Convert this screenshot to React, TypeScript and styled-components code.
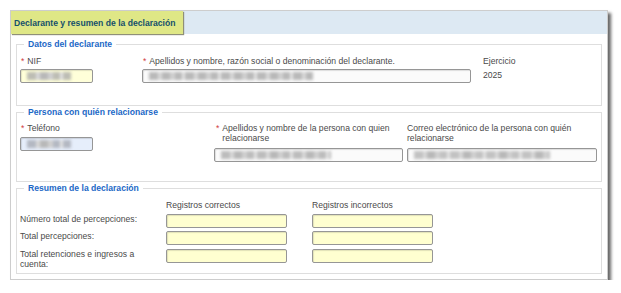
import React from "react";
import styled, { createGlobalStyle } from "styled-components";

const GlobalStyle = createGlobalStyle`
  html, body { margin: 0; padding: 0; background: #fff; }
  body {
    font-family: "Liberation Sans", Arial, sans-serif;
    font-size: 8.6px;
    line-height: 10px;
    color: #4a4a4a;
  }
`;

const Panel = styled.div`
  margin: 10px 0 0 10px;
  width: 598px;
  box-sizing: border-box;
  border: 1px solid #cdcdcd;
  background: #fff;
  box-shadow: 3px 3px 3px rgba(0, 0, 0, 0.6);
`;

const Header = styled.div`
  height: 23px;
  background: #dde9f3;
  display: flex;
`;

const TitleTab = styled.div`
  width: 172px;
  box-sizing: border-box;
  padding-left: 3px;
  background: #dfe786;
  box-shadow: 1px 1px 1px #8f8f78;
  display: flex;
  align-items: center;
  font-weight: bold;
  color: #15506b;
`;

const Body = styled.div`
  padding: 5px;
  display: flex;
  flex-direction: column;
  gap: 1px;
`;

const Fieldset = styled.fieldset<{ $pt: number; $pb: number }>`
  margin: 0;
  min-width: 0;
  border: 1px solid #dedede;
  padding: ${(p) => p.$pt}px 3px ${(p) => p.$pb}px 3px;
`;

const Legend = styled.legend`
  margin-left: 4px;
  padding: 0 4px;
  font-weight: bold;
  color: #1b68c6;
  line-height: 10px;
`;

const Grid = styled.div<{ $cols: string }>`
  display: grid;
  grid-template-columns: ${(p) => p.$cols};
  align-items: start;
`;

const Field = styled.div<{ $gap?: number }>`
  display: flex;
  flex-direction: column;
  align-items: flex-start;
  gap: ${(p) => p.$gap ?? 4}px;
`;

const Label = styled.div<{ $indent?: number }>`
  display: flex;
  padding-left: ${(p) => p.$indent ?? 0}px;
`;

const Req = styled.span`
  color: #d23c3c;
  margin-left: 1px;
  margin-right: 3px;
`;

const Input = styled.div<{ $w: number; $bg: string }>`
  width: ${(p) => p.$w}px;
  height: 14px;
  box-sizing: border-box;
  border: 1px solid #969696;
  border-radius: 2px;
  background: ${(p) => p.$bg};
  box-shadow: inset 1px 1px 1px rgba(0, 0, 0, 0.12);
  display: flex;
  align-items: center;
  padding-left: 6px;
  overflow: hidden;
`;

const Smudge = styled.span<{ $w: number; $tone: string }>`
  display: block;
  width: ${(p) => p.$w}px;
  height: 8px;
  background: repeating-linear-gradient(
    90deg,
    ${(p) => p.$tone} 0 9px,
    #d8d8d8 9px 13px,
    #b8b8b8 13px 21px,
    #d0d0d0 21px 26px,
    ${(p) => p.$tone} 26px 33px,
    #e4e4e4 33px 36px
  );
  filter: blur(1.4px);
`;

const Summary = styled.div`
  display: grid;
  grid-template-columns: 146px 146px 1fr;
  row-gap: 3.5px;
  align-items: start;
`;

const Cell = styled.div``;

const RowLabel = styled.div`
  padding-right: 8px;
`;

const ReqLabel = ({ text, indent }: { text: string; indent?: number }) => (
  <Label $indent={indent}>
    <Req>*</Req>
    <span>{text}</span>
  </Label>
);

export default function App() {
  return (
    <>
      <GlobalStyle />
      <Panel>
        <Header>
          <TitleTab>Declarante y resumen de la declaración</TitleTab>
        </Header>
        <Body>
          <Fieldset $pt={7} $pb={22}>
            <Legend>Datos del declarante</Legend>
            <Grid $cols="122px 341px 1fr">
              <Field $gap={3}>
                <ReqLabel text="NIF" />
                <Input $w={73} $bg="#ffffd9">
                  <Smudge $w={44} $tone="#bdbdb4" />
                </Input>
              </Field>
              <Field $gap={3}>
                <ReqLabel text="Apellidos y nombre, razón social o denominación del declarante." />
                <Input $w={329} $bg="#fbfbfb">
                  <Smudge $w={164} $tone="#b9b9b9" />
                </Input>
              </Field>
              <Field $gap={4}>
                <span>Ejercicio</span>
                <span>2025</span>
              </Field>
            </Grid>
          </Fieldset>

          <Fieldset $pt={6} $pb={19}>
            <Legend>Persona con quién relacionarse</Legend>
            <Grid $cols="194px 193px 1fr">
              <Field $gap={4}>
                <ReqLabel text="Teléfono" />
                <Input $w={73} $bg="#e6eefb">
                  <Smudge $w={44} $tone="#b4b8c2" />
                </Input>
              </Field>
              <Field $gap={5}>
                <ReqLabel indent={1} text="Apellidos y nombre de la persona con quien relacionarse" />
                <Input $w={189} $bg="#fbfbfb">
                  <Smudge $w={110} $tone="#bcbcbc" />
                </Input>
              </Field>
              <Field $gap={5}>
                <span>Correo electrónico de la persona con quién relacionarse</span>
                <Input $w={190} $bg="#fbfbfb">
                  <Smudge $w={136} $tone="#c2c2c2" />
                </Input>
              </Field>
            </Grid>
          </Fieldset>

          <Fieldset $pt={7} $pb={4}>
            <Legend>Resumen de la declaración</Legend>
            <Summary>
              <Cell />
              <Cell>Registros correctos</Cell>
              <Cell>Registros incorrectos</Cell>

              <RowLabel>Número total de percepciones:</RowLabel>
              <Input $w={121} $bg="#ffffd0" />
              <Input $w={121} $bg="#ffffd0" />

              <RowLabel>Total percepciones:</RowLabel>
              <Input $w={121} $bg="#ffffd0" />
              <Input $w={121} $bg="#ffffd0" />

              <RowLabel>Total retenciones e ingresos a cuenta:</RowLabel>
              <Input $w={121} $bg="#ffffd0" />
              <Input $w={121} $bg="#ffffd0" />
            </Summary>
          </Fieldset>
        </Body>
      </Panel>
    </>
  );
}
